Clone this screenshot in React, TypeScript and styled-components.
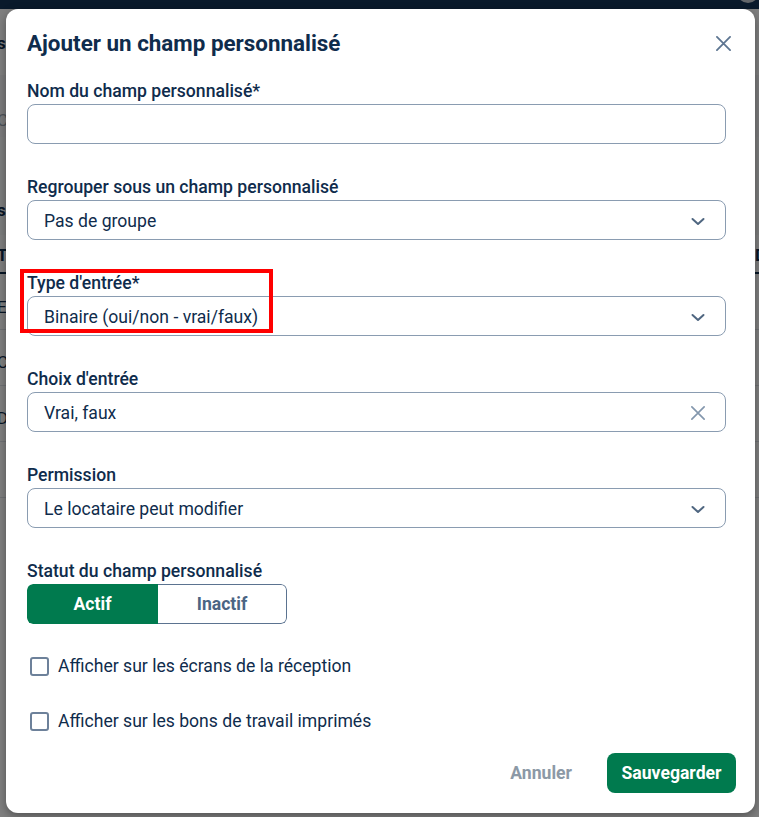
import React from 'react';
import styled, { createGlobalStyle } from 'styled-components';

const GlobalStyle = createGlobalStyle`
  html, body { margin: 0; padding: 0; }
  body { font-family: Roboto, "Liberation Sans", Arial, sans-serif; background: #ffffff; }
  * { box-sizing: border-box; }
`;

const NAVY = '#0f2c4c';
const GREEN = '#007a4e';

const Screen = styled.div`
  position: relative;
  width: 759px;
  height: 817px;
  overflow: hidden;
  background: #ffffff;
`;

/* ---------- page behind the dialog ---------- */
const BgPage = styled.div`
  display: flex;
  flex-direction: column;
`;

const TopBar = styled.div`
  height: 9px;
  background: #143456;
  display: flex;
  justify-content: flex-end;
`;

const Avatar = styled.div`
  width: 22px;
  height: 22px;
  border-radius: 50%;
  margin-top: -19px;
  background: #c9ced4;
`;

const BgRow = styled.div<{ $h: number; $pt: number; $bg?: string; $line?: string }>`
  height: ${(p) => p.$h}px;
  padding-top: ${(p) => p.$pt}px;
  background: ${(p) => p.$bg || '#ffffff'};
  border-bottom: ${(p) => p.$line || 'none'};
  display: flex;
  align-items: flex-start;
  justify-content: space-between;
  font-size: 17px;
  line-height: 20px;
`;

const BgText = styled.span<{ $bold?: boolean; $muted?: boolean }>`
  margin-left: -3px;
  font-weight: ${(p) => (p.$bold ? 700 : 400)};
  color: ${(p) => (p.$muted ? '#9aa5b1' : NAVY)};
`;

const BgRight = styled.span`
  margin-right: -7px;
  font-weight: 700;
  color: ${NAVY};
`;

const Overlay = styled.div`
  position: absolute;
  inset: 0;
  background: rgba(0, 0, 0, 0.5);
  display: flex;
  align-items: flex-start;
  padding: 9px 0 0 6px;
`;

/* ---------- dialog ---------- */
const Modal = styled.div`
  width: 749px;
  height: 804px;
  background: #ffffff;
  border-radius: 12px;
  box-shadow: 0 3px 10px rgba(0, 0, 0, 0.35);
  padding: 20px 19px 20px 21px;
  display: flex;
  flex-direction: column;
`;

const Header = styled.div`
  display: flex;
  align-items: center;
  justify-content: space-between;
  height: 28px;
`;

const Title = styled.h2`
  margin: 0;
  font-size: 22.4px;
  line-height: 28px;
  font-weight: 700;
  color: ${NAVY};
`;

const CloseButton = styled.button`
  width: 24px;
  height: 24px;
  border: none;
  background: none;
  padding: 0;
  margin-right: 1px;
  display: flex;
  align-items: center;
  justify-content: center;
  cursor: pointer;
`;

const Body = styled.div`
  margin-top: 24px;
  padding-right: 10px;
  display: flex;
  flex-direction: column;
`;

const Field = styled.div`
  position: relative;
  display: flex;
  flex-direction: column;
  gap: 2px;
  margin-bottom: 33px;
`;

const Label = styled.label`
  font-size: 17.6px;
  line-height: 21px;
  font-weight: 500;
  color: ${NAVY};
`;

const Box = styled.div`
  height: 40px;
  border: 1px solid #8a9cb1;
  border-radius: 8px;
  display: flex;
  align-items: center;
  justify-content: space-between;
  padding: 1px 20px 0 16px;
  font-size: 17.6px;
  color: ${NAVY};
  background: #ffffff;
`;

const Highlight = styled.div`
  position: absolute;
  left: -7px;
  top: -4px;
  width: 253px;
  height: 64px;
  border: 4px solid #ff0000;
  pointer-events: none;
`;

const Segmented = styled.div`
  display: flex;
  width: 260px;
  height: 40px;
  border-radius: 6px;
  overflow: hidden;
`;

const Segment = styled.div<{ $active?: boolean }>`
  flex: 0 0 ${(p) => (p.$active ? 131 : 129)}px;
  display: flex;
  align-items: center;
  justify-content: center;
  font-size: 17.6px;
  font-weight: 700;
  color: ${(p) => (p.$active ? '#ffffff' : '#4b6584')};
  background: ${(p) => (p.$active ? GREEN : '#ffffff')};
  border: ${(p) => (p.$active ? 'none' : '1px solid #5b7390')};
  border-left: none;
  border-radius: ${(p) => (p.$active ? '6px 0 0 6px' : '0 6px 6px 0')};
`;

const Checks = styled.div`
  margin-top: -3px;
  display: flex;
  flex-direction: column;
  gap: 31px;
`;

const CheckRow = styled.label`
  display: flex;
  align-items: center;
  gap: 9px;
  height: 24px;
  padding-left: 3px;
  font-size: 17.6px;
  color: ${NAVY};
`;

const CheckBox = styled.span`
  width: 19px;
  height: 19px;
  border: 2px solid #6d819a;
  border-radius: 3px;
  background: #ffffff;
`;

const Footer = styled.div`
  margin-top: auto;
  display: flex;
  justify-content: flex-end;
  align-items: center;
  gap: 19px;
`;

const TextButton = styled.button`
  height: 40px;
  padding: 0 16px;
  border: none;
  background: none;
  font-family: inherit;
  font-size: 17.6px;
  font-weight: 700;
  color: #8c99a6;
`;

const PrimaryButton = styled.button`
  height: 40px;
  width: 129px;
  padding: 0;
  border: none;
  border-radius: 8px;
  background: ${GREEN};
  font-family: inherit;
  font-size: 17.6px;
  font-weight: 700;
  color: #ffffff;
`;

const Chevron = () => (
  <svg width="14" height="10" viewBox="0 0 14 10" fill="none">
    <path d="M1.5 3 L7 8 L12.5 3" stroke="#4f6680" strokeWidth="2" strokeLinecap="round" strokeLinejoin="round" />
  </svg>
);

const Cross = ({ color, size }: { color: string; size: number }) => (
  <svg width={size} height={size} viewBox="0 0 16 16" fill="none">
    <path d="M1 1 L15 15 M15 1 L1 15" stroke={color} strokeWidth="1.9" strokeLinecap="round" />
  </svg>
);

const bgRows = [
  { h: 66, pt: 24, bg: '#ffffff', text: 's', bold: true },
  { h: 62, pt: 35, bg: '#f6f7f8', text: 'C', muted: true },
  { h: 98, pt: 63, bg: '#f9fafb', text: 's', bold: true },
  { h: 39, pt: 10, bg: '#ffffff', text: 'T', bold: true, line: '2px solid #0f2c4c', right: 'D' },
  { h: 56, pt: 23, bg: '#ffffff', text: 'E', line: '1px solid #dfe3e8' },
  { h: 56, pt: 22, bg: '#ffffff', text: 'C', line: '1px solid #dfe3e8' },
  { h: 56, pt: 22, bg: '#ffffff', text: 'D', line: '1px solid #dfe3e8' },
  { h: 56, pt: 22, bg: '#ffffff', text: '', line: '1px solid #dfe3e8' },
];

export default function App() {
  return (
    <>
      <GlobalStyle />
      <Screen>
        <BgPage>
          <TopBar>
            <Avatar />
          </TopBar>
          {bgRows.map((r, i) => (
            <BgRow key={i} $h={r.h} $pt={r.pt} $bg={r.bg} $line={r.line}>
              <BgText $bold={r.bold} $muted={r.muted}>{r.text}</BgText>
              <BgRight>{r.right || ''}</BgRight>
            </BgRow>
          ))}
        </BgPage>
        <Overlay>
          <Modal>
            <Header>
              <Title>Ajouter un champ personnalisé</Title>
              <CloseButton aria-label="Fermer">
                <Cross color="#5d7591" size={15} />
              </CloseButton>
            </Header>
            <Body>
              <Field>
                <Label>Nom du champ personnalisé*</Label>
                <Box />
              </Field>
              <Field>
                <Label>Regrouper sous un champ personnalisé</Label>
                <Box>
                  <span>Pas de groupe</span>
                  <Chevron />
                </Box>
              </Field>
              <Field>
                <Label>Type d'entrée*</Label>
                <Box>
                  <span>Binaire (oui/non - vrai/faux)</span>
                  <Chevron />
                </Box>
                <Highlight />
              </Field>
              <Field>
                <Label>Choix d'entrée</Label>
                <Box>
                  <span>Vrai, faux</span>
                  <Cross color="#8397ad" size={14} />
                </Box>
              </Field>
              <Field>
                <Label>Permission</Label>
                <Box>
                  <span>Le locataire peut modifier</span>
                  <Chevron />
                </Box>
              </Field>
              <Field>
                <Label>Statut du champ personnalisé</Label>
                <Segmented>
                  <Segment $active>Actif</Segment>
                  <Segment>Inactif</Segment>
                </Segmented>
              </Field>
              <Checks>
                <CheckRow>
                  <CheckBox />
                  Afficher sur les écrans de la réception
                </CheckRow>
                <CheckRow>
                  <CheckBox />
                  Afficher sur les bons de travail imprimés
                </CheckRow>
              </Checks>
            </Body>
            <Footer>
              <TextButton>Annuler</TextButton>
              <PrimaryButton>Sauvegarder</PrimaryButton>
            </Footer>
          </Modal>
        </Overlay>
      </Screen>
    </>
  );
}
